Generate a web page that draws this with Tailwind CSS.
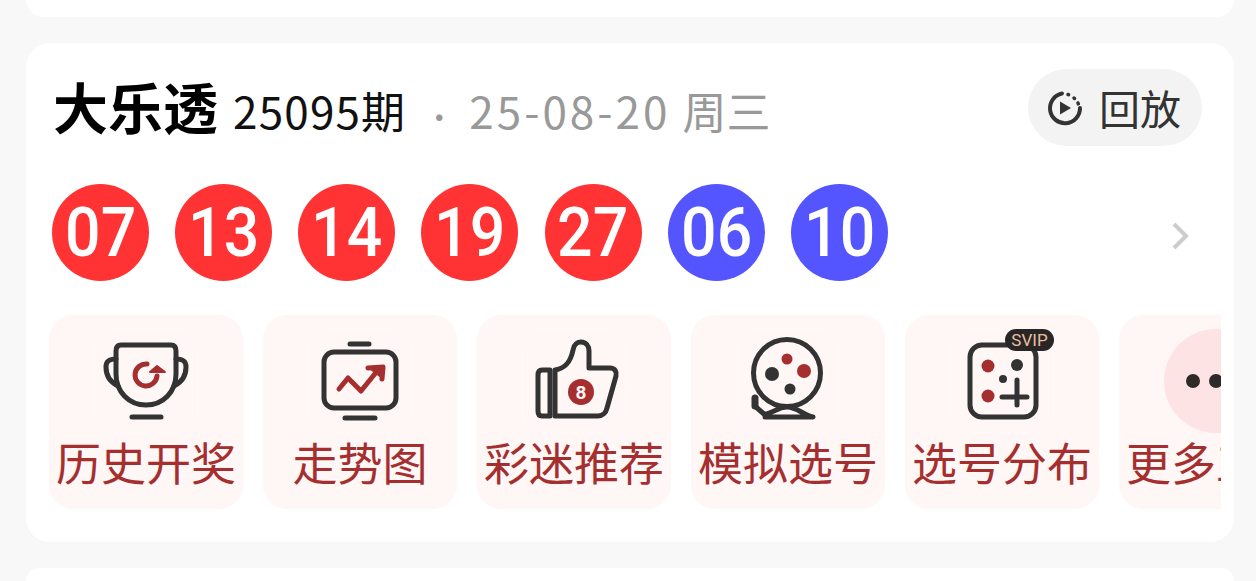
<!DOCTYPE html>
<html lang="zh-CN">
<head>
  <meta charset="UTF-8" />
  <title>大乐透</title>
  <script src="https://cdn.jsdelivr.net/npm/@tailwindcss/browser@4"></script>
</head>
<body class="bg-[#f8f8f8] font-['Noto_Sans_CJK_SC',sans-serif] overflow-hidden">
  <div class="h-[581px] w-[1256px] flex flex-col gap-[26px] pl-[26px] pr-[22px] overflow-hidden">
    <div class="h-[17px] shrink-0 bg-white rounded-b-[24px]"></div>

    <!-- Lottery card -->
    <section class="shrink-0 bg-white rounded-[24px] h-[499px] pt-[26px] pl-[23px] pr-[13px]">
      <div class="h-[77px] flex items-center pr-[19px]">
        <div class="flex-1 flex items-baseline pl-[5px] mb-[4px] whitespace-nowrap">
          <span class="-ml-[1px] text-[55px] leading-none font-bold text-black">大乐透</span>
          <span class="ml-[15px] text-[44px] leading-none tracking-[1.2px] text-[#111]">25095期</span>
          <span class="ml-[19px] w-[10px] text-[28px] leading-none text-[#999] font-medium">·</span>
          <span class="ml-[34px] text-[44px] leading-none tracking-[3px] text-[#999]">25-08-20</span>
          <span class="ml-[12px] text-[44px] leading-none text-[#999]">周三</span>
        </div>
        <button class="w-[174px] h-[77px] rounded-full bg-[#f3f3f3] flex items-center justify-center gap-[16px] pr-[2px] text-[41px] leading-none text-[#333]">
          <svg class="w-[36px] h-[36px]" viewBox="0 0 36 36" fill="none">
            <path d="M15 3.5A15 15 0 1 0 33 18" stroke="#333" stroke-width="4" stroke-linecap="round" />
            <path d="M21 4.5l.6 .2M27 8l.5 .5M31 13l.3 .8" stroke="#333" stroke-width="3.5" stroke-linecap="round" />
            <path d="M13 11.5l11 6.5-11 6.500z" fill="#333" />
          </svg>
          <span>回放</span>
        </button>
      </div>

      <!-- Balls -->
      <div class="mt-[38px] h-[97px] flex items-center pl-[3px] pr-[32px] gap-[26.17px] font-['Roboto',sans-serif] text-[68px] font-medium text-white">
        <div class="w-[97px] h-[97px] rounded-full bg-[#ff3333] flex items-center justify-center"><span class="inline-block scale-x-[.92]">07</span></div>
        <div class="w-[97px] h-[97px] rounded-full bg-[#ff3333] flex items-center justify-center"><span class="inline-block scale-x-[.92]">13</span></div>
        <div class="w-[97px] h-[97px] rounded-full bg-[#ff3333] flex items-center justify-center"><span class="inline-block scale-x-[.92]">14</span></div>
        <div class="w-[97px] h-[97px] rounded-full bg-[#ff3333] flex items-center justify-center"><span class="inline-block scale-x-[.92]">19</span></div>
        <div class="w-[97px] h-[97px] rounded-full bg-[#ff3333] flex items-center justify-center"><span class="inline-block scale-x-[.92]">27</span></div>
        <div class="w-[97px] h-[97px] rounded-full bg-[#5555ff] flex items-center justify-center"><span class="inline-block scale-x-[.92]">06</span></div>
        <div class="w-[97px] h-[97px] rounded-full bg-[#5555ff] flex items-center justify-center"><span class="inline-block scale-x-[.92]">10</span></div>
        <svg class="ml-auto w-[18px] h-[30px] mt-[7px]" viewBox="0 0 18 30" fill="none">
          <path d="M3 3l12 12-12 12" stroke="#cccccc" stroke-width="4" />
        </svg>
      </div>

      <!-- Tools -->
      <div class="mt-[34px] flex gap-[20px] overflow-hidden text-[45px] leading-none text-[#a52f2f] whitespace-nowrap">
        <div class="relative w-[194px] h-[194px] shrink-0 rounded-[24px] bg-[#fff6f6] flex flex-col items-center pt-[15px]">
          <svg class="w-[102px] h-[102px] rounded-[20px] outline outline-white/40" viewBox="0 0 102 102" fill="none" stroke="#333" stroke-width="5" stroke-linecap="round" stroke-linejoin="round">
            <path d="M26 15H76Q81 15 81 21V44C81 62 68 75 51 75C34 75 21 62 21 44V21Q21 15 26 15Z" />
            <path d="M21 29C14 29 11 31 11 37C11 46 15 52 23 56M81 29C88 29 91 31 91 37C91 46 87 52 79 56M37 87H66" />
            <path d="M52 34A11 11 0 1 0 62 46" stroke="#a52f2f" />
            <path d="M55 42L62 36L70 42Z" fill="#a52f2f" stroke="#a52f2f" stroke-width="2" />
          </svg>
          <span class="mt-[7px]">历史开奖</span>
        </div>
        <div class="relative w-[194px] h-[194px] shrink-0 rounded-[24px] bg-[#fff6f6] flex flex-col items-center pt-[15px]">
          <svg class="w-[102px] h-[102px] rounded-[20px] outline outline-white/40" viewBox="0 0 102 102" fill="none" stroke="#333" stroke-width="5" stroke-linecap="round" stroke-linejoin="round">
            <rect x="15" y="22" width="72" height="56" rx="10" />
            <path d="M41 14H60M36 88H66" />
            <path d="M30 59L39 48L52 61L69 40" stroke="#a52f2f" />
            <path d="M59 38L74 37L73 49" stroke="#a52f2f" fill="#a52f2f" />
          </svg>
          <span class="mt-[7px]">走势图</span>
        </div>
        <div class="relative w-[194px] h-[194px] shrink-0 rounded-[24px] bg-[#fff6f6] flex flex-col items-center pt-[15px]">
          <svg class="w-[102px] h-[102px] rounded-[20px] outline outline-white/40" viewBox="0 0 102 102" fill="none" stroke="#333" stroke-width="5" stroke-linecap="round" stroke-linejoin="round">
            <path d="M27 40H19Q15 40 15 45V81Q15 86 19 86H27Z" />
            <path d="M32 86V40C44 38 48 30 50 20C51 14 55 12 58 12C63 12 66 16 66 21V38H87C92 38 94 42 93 46L84 78C83 83 79 86 75 86Z" />
            <circle cx="58" cy="62" r="13" fill="#a52f2f" stroke="none" />
            <text x="58" y="69" text-anchor="middle" font-size="19" font-weight="700" font-family="Roboto, sans-serif" fill="#fff5f5" stroke="none">8</text>
          </svg>
          <span class="mt-[7px]">彩迷推荐</span>
        </div>
        <div class="relative w-[194px] h-[194px] shrink-0 rounded-[24px] bg-[#fff6f6] flex flex-col items-center pt-[15px]">
          <svg class="w-[102px] h-[102px] rounded-[20px] outline outline-white/40" viewBox="0 0 102 102" fill="none" stroke="#333" stroke-width="5" stroke-linecap="round" stroke-linejoin="round">
            <circle cx="50" cy="43" r="33.500" />
            <circle cx="50" cy="29" r="5.500" fill="#a52f2f" stroke="none" />
            <circle cx="67" cy="41" r="7" fill="#a52f2f" stroke="none" />
            <circle cx="35" cy="44" r="7" fill="#333" stroke="none" />
            <circle cx="53" cy="59" r="5.500" fill="#333" stroke="none" />
            <path d="M18 68V76" stroke-width="7" />
            <path d="M19 77L27 84C36 84 40 77 50 77C60 77 66 85 76 87H28" />
          </svg>
          <span class="mt-[7px]">模拟选号</span>
        </div>
        <div class="relative w-[194px] h-[194px] shrink-0 rounded-[24px] bg-[#fff6f6] flex flex-col items-center pt-[15px]">
          <svg class="w-[102px] h-[102px] rounded-[20px] outline outline-white/40" viewBox="0 0 102 102" fill="none" stroke="#333" stroke-width="5" stroke-linecap="round" stroke-linejoin="round">
            <rect x="19" y="15" width="66" height="72" rx="12" />
            <circle cx="37" cy="36" r="6.500" fill="#a52f2f" stroke="none" />
            <circle cx="66" cy="35" r="6" fill="#333" stroke="none" />
            <circle cx="52" cy="49" r="4" fill="#333" stroke="none" />
            <circle cx="37" cy="66" r="6.500" fill="#a52f2f" stroke="none" />
            <path d="M51 67H76M66 50V75" />
          </svg>
          <span class="absolute left-[100px] top-[14px] w-[49px] h-[22px] rounded-full bg-[#2b2626] flex items-center justify-center font-['Roboto',sans-serif] text-[17px] text-[#e8c0a0]">SVIP</span>
          <span class="mt-[7px]">选号分布</span>
        </div>
        <div class="relative w-[194px] h-[194px] shrink-0 rounded-[24px] bg-[#fff6f6] flex flex-col items-center pt-[14px]">
          <div class="w-[104px] h-[104px] rounded-full bg-[#fde3e3] flex items-center justify-center gap-[9px]">
            <span class="w-[14px] h-[14px] rounded-full bg-[#2e2a2a]"></span>
            <span class="w-[14px] h-[14px] rounded-full bg-[#2e2a2a]"></span>
            <span class="w-[14px] h-[14px] rounded-full bg-[#2e2a2a]"></span>
          </div>
          <span class="mt-[6px]">更多工具</span>
        </div>
      </div>
    </section>

    <div class="flex-1 bg-white rounded-t-[24px]"></div>
  </div>
</body>
</html>
